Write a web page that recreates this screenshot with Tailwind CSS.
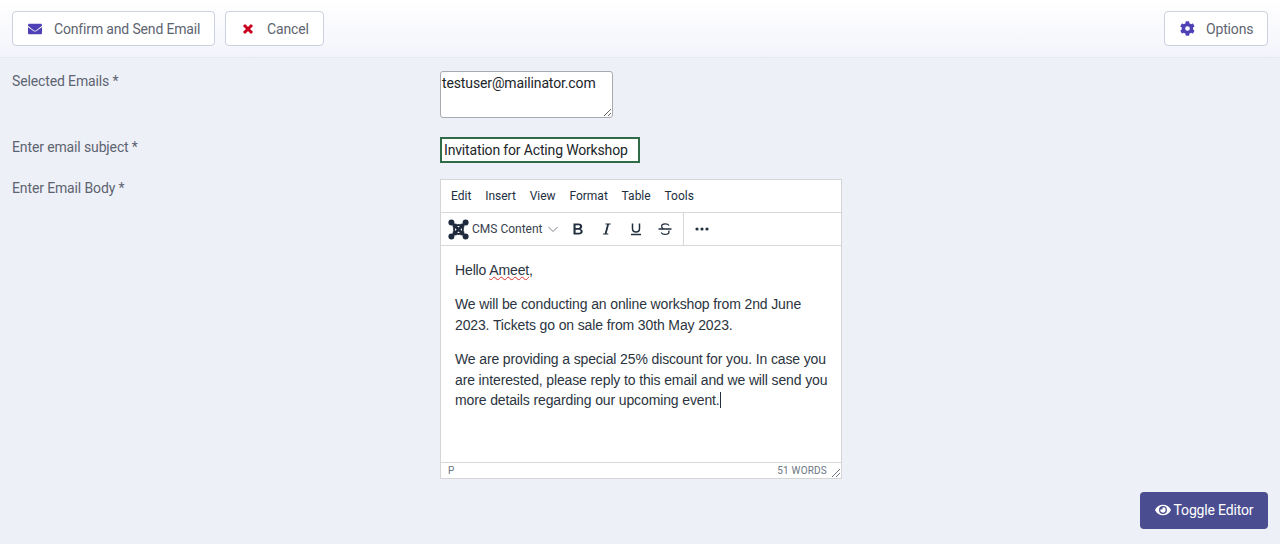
<!DOCTYPE html>
<html lang="en">
  <head>
    <meta charset="UTF-8" />
    <title>Send Email</title>
    <script src="https://cdn.jsdelivr.net/npm/@tailwindcss/browser@4"></script>
  </head>
  <body class="bg-[#eef0f8] h-[544px] overflow-hidden font-['Roboto',sans-serif] text-[#495057]">
    <!-- Toolbar -->
    <div class="h-[58px] px-3 pt-[11px] flex justify-between bg-gradient-to-b from-white to-[#f3f4fb] border-b border-[#e6e8f3]">
      <div class="flex gap-2.5">
        <button class="h-[35px] w-[203px] flex items-center pl-[15px] bg-white border border-[#ccd0e0] rounded text-sm tracking-[-0.16px] text-[#5d6470]">
          <svg class="w-[14px] h-[14px] mr-[12px]" viewBox="0 0 512 512" fill="#4f41b5"><path d="M502 190c4-3 10 0 10 5v205c0 27-21 48-48 48H48c-27 0-48-21-48-48V195c0-5 6-8 10-5 22 17 52 39 154 113 21 15 57 48 92 48s72-33 92-48c102-74 132-96 154-113zM256 320c23 0 57-29 73-41 133-96 143-105 174-129 6-5 9-12 9-19v-19c0-27-21-48-48-48H48C21 64 0 85 0 112v19c0 7 3 14 9 19 31 24 41 33 174 129 16 12 50 41 73 41z"/></svg>
          Confirm and Send Email
        </button>
        <button class="h-[35px] w-[99px] flex items-center pl-[15px] bg-white border border-[#ccd0e0] rounded text-sm tracking-[-0.16px] text-[#5d6470]">
          <svg class="w-[14px] h-[14px] mr-[12px]" viewBox="0 0 14 14" fill="none" stroke="#c8001e" stroke-width="3"><path d="M3 3l8 8M11 3l-8 8"/></svg>
          Cancel
        </button>
      </div>
      <button class="h-[35px] w-[104px] flex items-center pl-[15px] bg-white border border-[#ccd0e0] rounded text-sm tracking-[-0.16px] text-[#5d6470]">
        <svg class="w-[15px] h-[15px] mr-[11px]" viewBox="0 0 512 512" fill="#4f41b5"><path d="M487 316l-43-25c4-23 4-47 0-70l43-25c5-3 7-9 5-14-11-36-30-68-55-95-4-4-10-5-15-2l-43 25c-18-15-39-27-61-35V25c0-6-4-11-9-12-37-8-75-8-110 0-6 1-10 6-10 12v50c-22 8-43 20-61 35L85 85c-5-3-11-2-15 2-25 27-44 59-55 95-2 5 0 11 5 14l43 25c-4 23-4 47 0 70l-43 25c-5 3-7 9-5 14 11 36 30 68 55 95 4 4 10 5 15 2l43-25c18 15 39 27 61 35v50c0 6 4 11 10 12 37 8 75 8 110 0 5-1 9-6 9-12v-50c22-8 43-20 61-35l43 25c5 3 11 2 15-2 25-27 44-59 55-95 2-5 0-11-5-14zM256 336a80 80 0 110-160 80 80 0 010 160z"/></svg>
        Options
      </button>
    </div>

    <!-- Form -->
    <div class="pl-3 pt-[13px]">
      <div class="flex h-[66px]">
        <label class="w-[428px] text-sm tracking-[-0.13px] leading-[20px] text-[#5d6470]">Selected Emails *</label>
        <textarea class="w-[173px] h-[47px] bg-white border border-[#a9a9b0] rounded-[3px] px-px pt-px text-sm tracking-[-0.13px] leading-[21px] text-[#212529] font-['Roboto',sans-serif]">testuser@mailinator.com</textarea>
      </div>
      <div class="flex h-[42px]">
        <label class="w-[428px] text-sm tracking-[-0.13px] leading-[20px] text-[#5d6470]">Enter email subject *</label>
        <input class="w-[200px] h-[26px] bg-white border-2 border-[#2f6b47] pl-0.5 text-sm tracking-[-0.16px] text-[#212529] outline-none" value="Invitation for Acting Workshop" />
      </div>
      <div class="flex">
        <label class="w-[428px] text-sm tracking-[-0.13px] leading-[19px] text-[#5d6470]">Enter Email Body *</label>
        <!-- Editor -->
        <div class="w-[402px] h-[300px] bg-white border border-[#d5d5d5] flex flex-col">
          <div class="h-[33px] flex items-center gap-[13.8px] px-2.5 border-b border-[#d8d8d8] text-xs text-[#222f3e]">
            <span>Edit</span><span>Insert</span><span>View</span><span>Format</span><span>Table</span><span>Tools</span>
          </div>
          <div class="h-[33px] flex items-center border-b border-[#d8d8d8] text-[#222f3e]">
            <div class="w-[243px] h-full flex items-center border-r border-[#d8d8d8] pl-[7px]">
              <svg class="w-[21px] h-[21px] mr-[3px]" viewBox="0 0 21 21" fill="none" stroke="#1f2a3c">
                <path stroke-width="2.800" d="M4 4l13 13M17 4L4 17"/>
                <path stroke-width="2" d="M5 8.500Q10.500 3.500 16 8.500M5 12.500Q10.500 17.500 16 12.500M8.500 5Q3.500 10.500 8.500 16M12.500 5Q17.500 10.500 12.500 16"/>
                <g fill="#1f2a3c" stroke="none"><circle cx="3.400" cy="3.400" r="3"/><circle cx="17.600" cy="3.400" r="3"/><circle cx="3.400" cy="17.600" r="3"/><circle cx="17.600" cy="17.600" r="3"/></g>
              </svg>
              <span class="text-xs text-[#39424f]">CMS Content</span>
              <svg class="w-[10px] h-[10px] ml-[5px]" viewBox="0 0 10 10" fill="none" stroke="#7b818a" stroke-width="1"><path d="M0.500 3l4.500 4.500L9.500 3"/></svg>
              <svg class="w-[14px] h-[14px] ml-[13px]" viewBox="0 0 14 14" fill="#222f3e"><path d="M2.500 1.500h5c2.200 0 3.700 1.200 3.700 3 0 1.100-.6 2-1.500 2.400 1.200.4 2 1.400 2 2.700 0 1.900-1.600 3-3.900 3H2.500zM4.600 3.200v2.900h2.600c1.100 0 1.800-.6 1.800-1.500s-.7-1.400-1.800-1.400zm0 4.500v3.100h3c1.200 0 2-.6 2-1.600s-.8-1.500-2-1.500z"/></svg>
              <svg class="w-[14px] h-[14px] ml-[15px]" viewBox="0 0 14 14" fill="#222f3e"><path d="M5.500 1.500h5.200v1H9L6.600 11.500h1.700v1H3v-1h1.700l2.400-9H5.500z"/></svg>
              <svg class="w-[14px] h-[14px] ml-[15px]" viewBox="0 0 14 14" fill="none" stroke="#222f3e" stroke-width="1.500"><path d="M3.500 1.500v5.200c0 2 1.400 3.200 3.500 3.200s3.500-1.200 3.500-3.200V1.500M2 12.600h10"/></svg>
              <svg class="w-[14px] h-[14px] ml-[15px]" viewBox="0 0 14 14" fill="none" stroke="#222f3e" stroke-width="1.300"><path d="M11 3.500C10.400 2.400 9 1.800 7.200 1.800 5 1.800 3.600 2.800 3.600 4.300c0 .9.500 1.700 1.600 2.400M10.600 8.600c.3.500.4 1 .4 1.400 0 1.500-1.600 2.400-3.900 2.400-1.900 0-3.300-.7-3.900-1.900M.5 7h13"/></svg>
            </div>
            <svg class="w-[14px] h-[14px] ml-[11px]" viewBox="0 0 14 14" fill="#222f3e"><circle cx="2" cy="7" r="1.600"/><circle cx="7" cy="7" r="1.600"/><circle cx="12" cy="7" r="1.600"/></svg>
          </div>
          <div class="flex-1 pl-3.5 pr-2 pt-[13.500px] text-sm tracking-[-0.13px] leading-[20.500px] text-[#2b3440] font-['Liberation_Sans',sans-serif]">
            <p class="mb-3.5">Hello <span class="underline decoration-wavy decoration-[#d32f2f] decoration-1 underline-offset-1 [text-decoration-skip-ink:none]">Ameet</span>,</p>
            <p class="mb-3.5">We will be conducting an online workshop from 2nd June 2023. Tickets go on sale from 30th May 2023.</p>
            <p>We are providing a special 25% discount for you. In case you are interested, please reply to this email and we will send you more details regarding our upcoming event.<span class="inline-block w-px h-[16px] bg-[#222f3e] align-[-3px]"></span></p>
          </div>
          <div class="relative h-[16px] flex items-center justify-between pl-[7px] pr-3.5 border-t border-[#d8d8d8] text-[10px] tracking-[0.2px] text-[#6c7683]">
            <span>P</span>
            <span>51 WORDS</span>
            <svg class="absolute right-0 bottom-0 w-[10px] h-[10px]" viewBox="0 0 10 10" stroke="#6c7683" stroke-width="1"><path d="M1 9l8-8M5 9l4-4"/></svg>
          </div>
        </div>
      </div>
      <div class="flex justify-end pr-3 mt-[13px]">
        <button class="w-[128px] h-[37px] pb-0.5 flex items-center justify-center gap-[3px] bg-[#4a4d90] rounded text-sm tracking-[-0.16px] text-white">
          <svg class="w-[16px] h-[14px]" viewBox="0 0 576 512" fill="white"><path d="M572 241C518 136 410 64 288 64S58 136 4 241a32 32 0 000 30c54 105 162 177 284 177s230-72 284-177a32 32 0 000-30zM288 400a144 144 0 110-288 144 144 0 010 288zm0-240a95 95 0 00-25 4 48 48 0 01-67 67 96 96 0 1092-71z"/></svg>
          Toggle Editor
        </button>
      </div>
    </div>
  </body>
</html>
